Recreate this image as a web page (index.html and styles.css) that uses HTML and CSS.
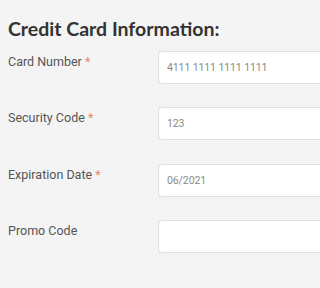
FILE: index.html
```html
<!DOCTYPE html>
<html>
<head>
<meta charset="utf-8">
<link rel="stylesheet" href="styles.css">
</head>
<body>
<div class="page">
  <h2 class="title">Credit Card Information:</h2>
  <div class="row">
    <label class="label">Card Number <span class="req">*</span></label>
    <input class="field" type="text" placeholder="4111 1111 1111 1111">
  </div>
  <div class="row">
    <label class="label">Security Code <span class="req">*</span></label>
    <input class="field" type="text" placeholder="123">
  </div>
  <div class="row">
    <label class="label">Expiration Date <span class="req">*</span></label>
    <input class="field" type="text" placeholder="06/2021">
  </div>
  <div class="row">
    <label class="label">Promo Code</label>
    <input class="field" type="text">
  </div>
</div>
</body>
</html>
```
FILE: styles.css
```css
html, body {
  margin: 0;
  padding: 0;
  background: #f4f4f4;
  overflow: hidden;
}
.page {
  padding: 19px 0 0 8px;
  font-family: Roboto, "Liberation Sans", sans-serif;
}
.title {
  margin: 0 0 12px 0;
  font-family: Lato, "Liberation Sans", sans-serif;
  font-weight: 700;
  font-size: 19.5px;
  line-height: 20px;
  color: #333;
}
.row {
  display: flex;
  align-items: flex-start;
  margin-bottom: 23.4px;
}
.label {
  width: 150px;
  flex: none;
  font-size: 12.5px;
  line-height: 18px;
  padding-top: 2px;
  color: #555;
}
.req {
  color: #e8876a;
}
.field {
  flex: 1;
  min-width: 0;
  box-sizing: border-box;
  height: 33px;
  margin: 0;
  padding: 0 8px;
  border: 1px solid #e0e0e0;
  border-right: none;
  border-radius: 3px 0 0 3px;
  background: #fff;
  font-family: Roboto, "Liberation Sans", sans-serif;
  font-size: 10.5px;
  letter-spacing: -0.1px;
  color: #555;
  outline: none;
}
.field::placeholder {
  color: #8a8a8a;
}
```
